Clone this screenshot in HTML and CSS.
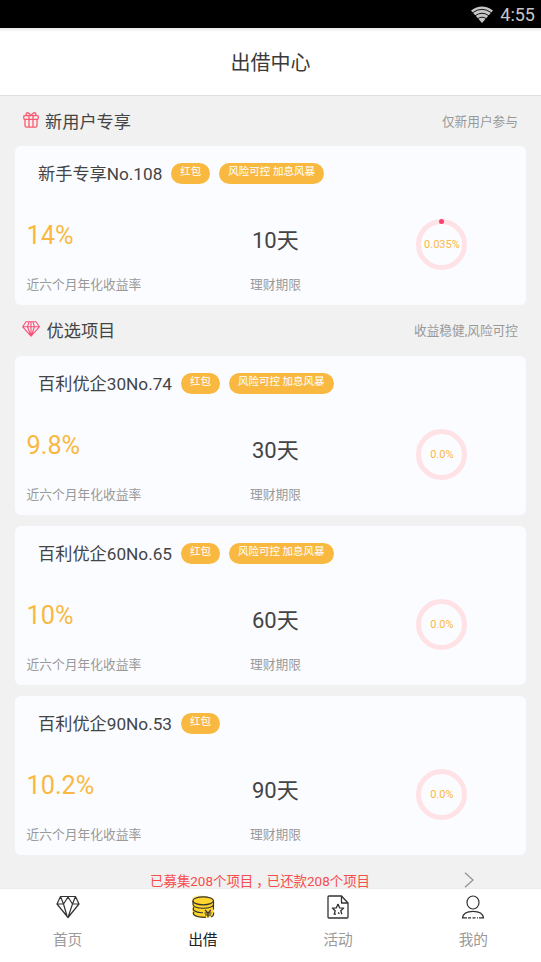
FILE: index.html
```html
<!DOCTYPE html>
<html lang="zh-CN">
<head>
<meta charset="utf-8">
<meta name="viewport" content="width=device-width, initial-scale=1">
<title>出借中心</title>
<link rel="stylesheet" href="styles.css">
</head>
<body>
<div class="app">
  <div class="status">
    <svg class="wifi" viewBox="0 0 22 17"><path d="M0 4.600Q11-3.800 22 4.600L11 17Z" fill="#c6c6c6"/><path d="M1.500 6.800Q11-.2 20.500 6.800M4 9.800Q11 4.700 18 9.800M6.600 12.700Q11 9.700 15.400 12.700" fill="none" stroke="#000" stroke-width=".9"/></svg>
    <span class="clock">4:55</span>
  </div>
  <header class="header"><h1>出借中心</h1></header>

  <main class="content">
    <section>
      <div class="section-head">
        <svg class="gift" viewBox="0 0 16 16" fill="none" stroke="#fb5a70" stroke-width="1.300"><rect x=".8" y="3.700" width="14.400" height="3.600" rx=".8"/><path d="M2 7.300V13.600Q2 15.200 3.600 15.200H12.400Q14 15.200 14 13.600V7.300M6 3.700V15M10 3.700V15M7.700 3.600C6.500 1 4.500.2 3.500 1.200Q2.700 2.200 3.700 3.600M8.300 3.600C9.500 1 11.500.2 12.500 1.200Q13.300 2.200 12.300 3.600"/></svg>
        <h2>新用户专享</h2>
        <span class="note">仅新用户参与</span>
      </div>
      <article class="card">
        <div class="card-title"><h3>新手专享No.108</h3><span class="tag">红包</span><span class="tag">风险可控 加息风暴</span></div>
        <div class="stats">
          <div class="rate"><strong>14%</strong><span>近六个月年化收益率</span></div>
          <div class="term"><strong>10天</strong><span>理财期限</span></div>
          <div class="ring started">0.035%</div>
        </div>
      </article>
    </section>

    <section>
      <div class="section-head preferred">
        <svg class="gem" viewBox="0 0 18 16" fill="none" stroke="#fb4f78" stroke-width="1.100" stroke-linejoin="round"><path d="M4 .8H14L17.300 5.800 9 15.200.7 5.800ZM.7 5.800H17.300M7 .8L5.500 5.800 9 15.200 12.500 5.800 11 .8M9 .8V14"/></svg>
        <h2>优选项目</h2>
        <span class="note">收益稳健,风险可控</span>
      </div>
      <article class="card">
        <div class="card-title"><h3>百利优企30No.74</h3><span class="tag">红包</span><span class="tag">风险可控 加息风暴</span></div>
        <div class="stats">
          <div class="rate"><strong>9.8%</strong><span>近六个月年化收益率</span></div>
          <div class="term"><strong>30天</strong><span>理财期限</span></div>
          <div class="ring">0.0%</div>
        </div>
      </article>
      <article class="card">
        <div class="card-title"><h3>百利优企60No.65</h3><span class="tag">红包</span><span class="tag">风险可控 加息风暴</span></div>
        <div class="stats">
          <div class="rate"><strong>10%</strong><span>近六个月年化收益率</span></div>
          <div class="term"><strong>60天</strong><span>理财期限</span></div>
          <div class="ring">0.0%</div>
        </div>
      </article>
      <article class="card">
        <div class="card-title"><h3>百利优企90No.53</h3><span class="tag">红包</span></div>
        <div class="stats">
          <div class="rate"><strong>10.2%</strong><span>近六个月年化收益率</span></div>
          <div class="term"><strong>90天</strong><span>理财期限</span></div>
          <div class="ring">0.0%</div>
        </div>
      </article>
    </section>

    <div class="summary">
      <span>已募集208个项目<span class="comma">，</span>已还款208个项目</span>
      <svg class="chevron" viewBox="0 0 10 16" fill="none" stroke="#999" stroke-width="1.500"><path d="M1 .8L9 8 1 15.200"/></svg>
    </div>
  </main>

  <nav class="tabs">
    <a class="tab">
      <svg viewBox="0 0 24 24" fill="none" stroke="#333" stroke-width="1.200" stroke-linejoin="round"><path d="M4.500 1.500H19.500L23 9 12 22.500 1 9ZM1 9H7.500L12 2 16.500 9H23M4.500 1.500L7.500 9 11 21M19.500 1.500L16.500 9 12 22.500"/></svg>
      <span>首页</span>
    </a>
    <a class="tab active">
      <svg viewBox="0 0 24 24" fill="none" stroke="#333" stroke-width="1.150"><path d="M1.500 2Q11-2 22.500 4L23 19Q21 23 13 23 3 23 1 18Z" fill="#ffeb94" stroke="none"/><path d="M2 5.500Q2 1.500 12 1.500T22.500 5.500V18Q22.500 22.500 12 22.500T2 18Z" fill="#ffd52e" stroke="none"/><ellipse cx="12.200" cy="5.800" rx="10.300" ry="4"/><path d="M2 6V9.500Q2.500 13 12 13.300 22 13 22.500 9.500V6M3 12Q1.500 14 3 15.500 6 18 12 17.700M22.500 10V14.500M3 16.800Q1.500 18.500 3.500 20.300 7 22.500 15 22.300M20 22Q23 21 22.700 17.500M14 15L17 18 20 15M13.500 18H20.500M14 20H20M17 18V22.500"/></svg>
      <span>出借</span>
    </a>
    <a class="tab">
      <svg viewBox="0 0 24 24" fill="none" stroke="#333" stroke-width="1.300" stroke-linejoin="round"><path d="M15.500 1H3Q2 1 2 2V22Q2 23 3 23H21Q22 23 22 22V8L15.500 1V8H22"/><path d="M12 9L13.600 12.800 17.700 13.100 14.800 15.800 15.800 19.200M13.500 18.600L12 17.600M10 19.200H8.200L9.200 15.800 6.300 13.100 10.400 12.800 12 9"/></svg>
      <span>活动</span>
    </a>
    <a class="tab">
      <svg viewBox="0 0 24 24" fill="none" stroke="#333" stroke-width="1.200"><ellipse cx="12" cy="7.500" rx="6" ry="6.500"/><path d="M6 22.900H1.500C2 18.500 5.500 16.300 12 16.300S22 18.500 22.500 22.900H18"/><path d="M7 22.900H17" stroke-dasharray="3 1.500"/></svg>
      <span>我的</span>
    </a>
  </nav>
</div>
</body>
</html>
```
FILE: styles.css
```css
* { box-sizing: border-box; }
body {
  margin: 0;
  background: #f1f1f1;
  color: #444;
  font-family: Roboto, "Noto Sans CJK SC", sans-serif;
}
h1, h2, h3, strong { margin: 0; font-weight: 400; }
svg { display: block; flex: none; }
.app { height: 962px; display: flex; flex-direction: column; overflow: hidden; }

.status {
  flex: none;
  height: 28px;
  padding: 1px 6px 0 0;
  display: flex;
  align-items: center;
  justify-content: flex-end;
  gap: 7px;
  background: #000;
  color: #c6c6c6;
}
.wifi { width: 22px; height: 17px; }
.clock { font-size: 18px; line-height: 28px; }
.header {
  flex: none;
  height: 68px;
  padding-top: 2px;
  display: flex;
  align-items: center;
  justify-content: center;
  background: linear-gradient(#e8e8e8, #fff 4px);
  border-bottom: 1px solid #dedede;
}
.header h1 { font-size: 20px; line-height: 30px; color: #3a3a3a; }

.content { flex: 1; min-height: 0; overflow: hidden; padding: 0 15px; }
.section-head { height: 50px; padding: 0 8px 0 7px; display: flex; align-items: center; }
.section-head.preferred { height: 51.500px; }
.section-head h2 { font-size: 17.200px; line-height: 24px; padding-top: 1px; }
.gift { width: 16px; height: 16px; margin: -2px 6px 0 1px; }
.gem { width: 18px; height: 16px; margin: -3px 6.500px 0 0; }
.note { margin: -2px 0 0 auto; font-size: 12.700px; color: #999; }

.card {
  height: 158.500px;
  margin-bottom: 11.500px;
  padding-top: 17px;
  border-radius: 6px;
  background: #fbfcff;
}
section:first-child .card { margin-bottom: 0; }
.card-title { height: 21px; padding-left: 23px; display: flex; align-items: center; gap: 9px; }
.card-title h3 { font-size: 17.200px; line-height: 21px; padding-top: 2px; }
.tag {
  height: 21px;
  padding: 0 9px;
  border-radius: 10.500px;
  background: #f9b941;
  color: #fff;
  font-size: 10.500px;
  line-height: 17px;
  white-space: nowrap;
}
.stats { display: grid; grid-template-columns: 235px 165px 1fr; padding-top: 35px; }
.rate, .term { display: flex; flex-direction: column; }
.rate { padding-left: 11.500px; }
.rate strong { font-size: 25.300px; line-height: 34px; color: #fab842; margin-bottom: 22.900px; }
.term strong { font-size: 22px; line-height: 34px; padding-left: 2px; margin: 4.900px 0 18px; }
.rate span, .term span { font-size: 12.750px; line-height: 18px; color: #999; }
.ring {
  position: relative;
  width: 51px;
  height: 51px;
  margin: 0 0 0 1.400px;
  border: 5px solid #ffe2e6;
  border-radius: 50%;
  display: flex;
  align-items: center;
  justify-content: center;
  font-size: 11px;
  line-height: 14px;
  padding-top: 1px;
  color: #fab842;
}
.ring.started::before {
  content: "";
  position: absolute;
  top: -5px;
  left: 18px;
  width: 5px;
  height: 5px;
  border-radius: 50%;
  background: #ff3d6e;
}

.summary {
  height: 33px;
  padding: 4px 52px 0 135px;
  display: flex;
  align-items: flex-start;
  justify-content: space-between;
  color: #f64d4d;
  font-size: 13.450px;
  line-height: 24px;
  white-space: nowrap;
}
.comma { padding-left: 3px; letter-spacing: -3px; }
.chevron { width: 10px; height: 16px; margin-top: 2px; }

.tabs {
  flex: none;
  height: 74px;
  display: grid;
  grid-template-columns: repeat(4, 1fr);
  background: #fff;
  border-top: 1px solid #ececec;
}
.tab { display: flex; flex-direction: column; align-items: center; padding-top: 6px; color: #999; }
.tab svg { width: 24px; height: 24px; }
.tab span { font-size: 14.700px; line-height: 20px; margin-top: 11px; }
.tab.active { color: #222; }
```
